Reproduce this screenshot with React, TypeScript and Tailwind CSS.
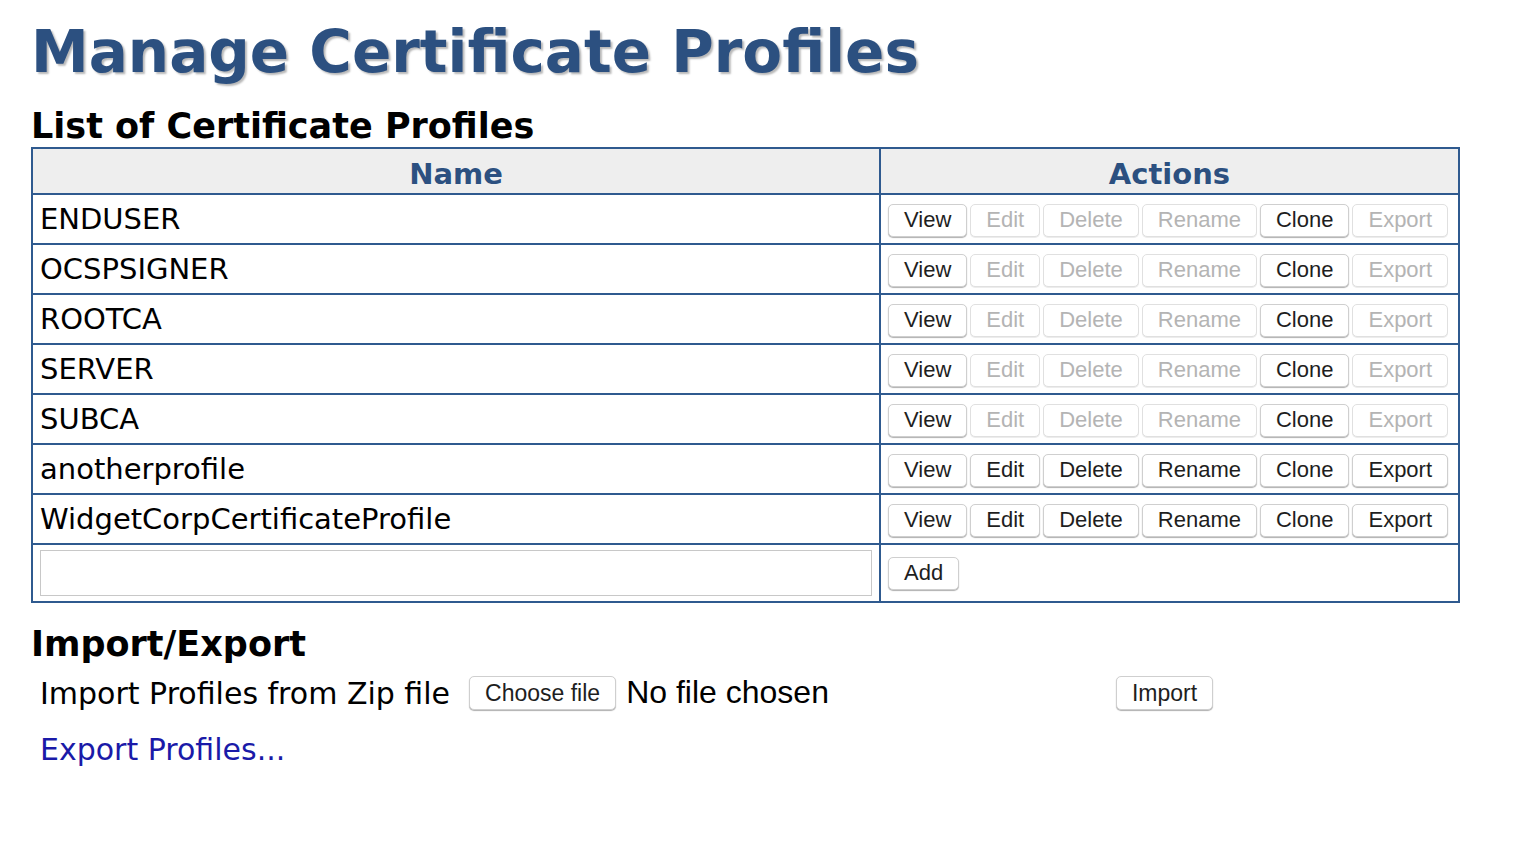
import React from "react";

type Profile = { name: string; fixed: boolean };

const profiles: Profile[] = [
  { name: "ENDUSER", fixed: true },
  { name: "OCSPSIGNER", fixed: true },
  { name: "ROOTCA", fixed: true },
  { name: "SERVER", fixed: true },
  { name: "SUBCA", fixed: true },
  { name: "anotherprofile", fixed: false },
  { name: "WidgetCorpCertificateProfile", fixed: false },
];

const Btn = ({ label, disabled, big }: { label: string; disabled?: boolean; big?: boolean }) => {
  return (
    <button
      className={
        "px-[15px] rounded-[5px] border bg-white leading-none font-['Liberation_Sans',sans-serif] " +
        (big ? "h-[34px] text-[23px] " : "h-[33px] text-[22px] ") +
        (disabled
          ? "border-[#e0e0e0] text-[#b4b4b4] shadow-[0_1px_0_#ececec]"
          : "border-[#cfcfcf] text-[#1e1e1e] shadow-[0_1px_1px_#b0b0b0]")
      }
    >
      {label}
    </button>
  );
};

export default function App() {
  return (
    <div className="min-h-screen bg-white px-[31px] pt-[12px] font-['DejaVu_Sans',Verdana,sans-serif]">
      <h1 className="text-[58px] font-bold text-[#2c5080] leading-[80px] [text-shadow:2px_2px_2px_#b8b8b8]">
        Manage Certificate Profiles
      </h1>
      <h2 className="text-[35px] font-bold text-black leading-[42px] mt-[13px]">
        List of Certificate Profiles
      </h2>

      <table className="border-collapse border-2 border-[#2f5a8f] w-[1429px]">
        <thead>
          <tr className="bg-[#eeeeee]">
            <th className="h-[46px] p-0 pt-[5px] border-2 border-[#2f5a8f] w-[848px] text-[29px] leading-[34px] font-bold text-[#2c5080]">
              Name
            </th>
            <th className="h-[46px] p-0 pt-[5px] border-2 border-[#2f5a8f] text-[29px] leading-[34px] font-bold text-[#2c5080]">
              Actions
            </th>
          </tr>
        </thead>
        <tbody>
          {profiles.map((p) => (
            <tr key={p.name}>
              <td className="h-[50px] border-2 border-[#2f5a8f] px-[7px] py-0 text-[29px] leading-[34px] text-black align-middle">
                {p.name}
              </td>
              <td className="h-[50px] border-2 border-[#2f5a8f] px-[7px] py-0 pt-[2px] align-middle">
                <div className="flex gap-[3px]">
                  <Btn label="View" />
                  <Btn label="Edit" disabled={p.fixed} />
                  <Btn label="Delete" disabled={p.fixed} />
                  <Btn label="Rename" disabled={p.fixed} />
                  <Btn label="Clone" />
                  <Btn label="Export" disabled={p.fixed} />
                </div>
              </td>
            </tr>
          ))}
          <tr>
            <td className="h-[58px] border-2 border-[#2f5a8f] px-[7px] py-0">
              <input className="block w-full h-[46px] border border-[#c8c8c8] outline-none" />
            </td>
            <td className="h-[58px] border-2 border-[#2f5a8f] px-[7px] py-0">
              <Btn label="Add" />
            </td>
          </tr>
        </tbody>
      </table>

      <h2 className="text-[35px] font-bold text-black leading-[42px] mt-[20px]">
        Import/Export
      </h2>
      <div className="flex items-start mt-[9px] pl-[9px]">
        <span className="text-[30px] leading-[40px] text-black">Import Profiles from Zip file</span>
        <div className="ml-[19px] mt-[2px]">
          <Btn label="Choose file" big />
        </div>
        <span className="ml-[10px] text-[32px] leading-[36px] text-black font-['Liberation_Sans',sans-serif]">
          No file chosen
        </span>
        <div className="ml-[287px] mt-[2px]">
          <Btn label="Import" big />
        </div>
      </div>
      <a href="#" className="block mt-[16px] pl-[9px] text-[30px] leading-[40px] text-[#1a1aa8]">
        Export Profiles...
      </a>
    </div>
  );
}
